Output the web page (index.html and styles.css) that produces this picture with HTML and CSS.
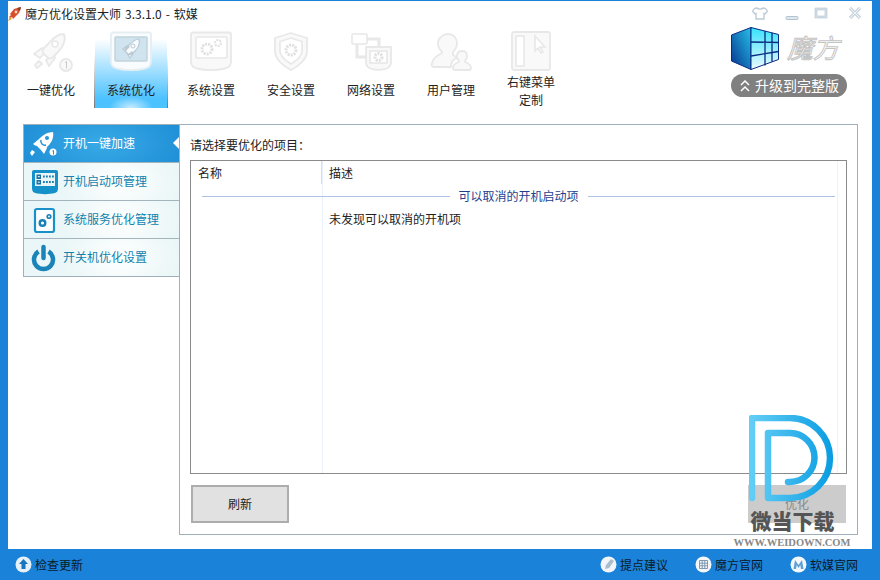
FILE: index.html
```html
<!DOCTYPE html>
<html lang="zh-CN">
<head>
<meta charset="utf-8">
<title>魔方优化设置大师</title>
<link rel="stylesheet" href="styles.css">
</head>
<body>
<div class="window">
  <div class="app">
    <header class="titlebar">
      <div class="title">
        <svg class="app-icon" viewBox="0 0 14 16"><path d="M13 1 6 3 2 8l1 1-2 2 1 1 2-1 1 2 1-1 1-1 4-4z" fill="#d8502a"/><path d="M13 1 9 2l3 3z" fill="#8a3a28"/><path d="M2 11 0 15l4-2z" fill="#e9a03a"/><circle cx="8" cy="6" r="1.400" fill="#f6d6c0"/></svg>
        <span class="title-text">魔方优化设置大师 3.3.1.0 - 软媒</span>
      </div>
      <div class="winbtns">
        <svg viewBox="0 0 16 16" class="wb wb-shirt"><path d="M5 3C3 3 1 4.500 .8 6.500L3 9l1-.5V14h8V8.500l1 .5 2.200-2.500C15 4.500 13 3 11 3 10 4.500 6 4.500 5 3z" fill="#fff" stroke="#bccbd6" stroke-width="1.400"/></svg>
        <svg viewBox="0 0 16 16" class="wb wb-min"><rect x="2" y="11.500" width="12" height="3" rx="1" fill="#dfe8ee" stroke="#b4c5d2"/></svg>
        <svg viewBox="0 0 16 16" class="wb wb-max"><path d="M2 3h12v10H2zM4 5h8v6H4z" fill="#d6e0e7" fill-rule="evenodd" stroke="#b4c5d2" stroke-width=".6"/></svg>
        <svg viewBox="0 0 16 16" class="wb"><path d="M3 3l10 10M13 3 3 13" stroke="#b4c5d2" stroke-width="3"/><path d="M3 3l10 10M13 3 3 13" stroke="#eef3f6" stroke-width="1.200"/></svg>
      </div>
    </header>

    <div class="toolbar">
      <nav class="tabs">
        <a class="tab">
          <svg class="tab-icon" viewBox="0 0 44 40">
            <path class="ic" d="M5 21l8-6 5 2-7 8zM20 33l6-8-1-4-8 6z"/>
            <path class="ic" d="M35 1c2 5 0 12-6 18l-5 5c-2 2-4 2-6 0l-3-3c-2-2-2-4 0-6l5-5C25 4 30 1 35 1z"/>
            <circle class="ici" cx="26" cy="11" r="3"/>
            <path class="ic" d="M10 28l3 3-5 4-2-3z"/>
            <circle class="ic" cx="37" cy="32" r="6"/>
            <path class="stroke-num" d="M36 29.500l1.500-1v7"/>
          </svg>
          <span>一键优化</span>
        </a>
        <a class="tab active">
          <svg class="tab-icon" viewBox="0 0 44 40">
            <path class="ic" d="M4 -.5h36a2 2 0 0 1 2 2v27c0 4-2 6-6 7-9 2-19 2-28 0-4-1-6-3-6-7v-27a2 2 0 0 1 2-2z"/>
            <rect class="panel-ic" x="6" y="4" width="32" height="24" rx="1"/>
            <path class="rk" d="M30 6c1 4 0 8-4 12l-3 3c-1 1-3 1-4 0l-2-2c-1-1-1-3 0-4l3-3c3-3 7-6 10-6zM14 16l4-3 2 1-4 4zM21 25l3-4-1-2-4 3z"/>
            <circle class="rkc" cx="24" cy="13" r="2"/>
          </svg>
          <span>系统优化</span>
        </a>
        <a class="tab">
          <svg class="tab-icon" viewBox="0 0 44 40">
            <path class="ic" d="M4 -.5h36a2 2 0 0 1 2 2v27c0 4-2 6-6 7-9 2-19 2-28 0-4-1-6-3-6-7v-27a2 2 0 0 1 2-2z"/>
            <rect class="ici" x="7" y="4" width="31" height="21" rx="1"/>
            <circle class="gear" cx="18" cy="16" r="5"/>
            <circle class="gear small" cx="29" cy="10" r="3"/>
          </svg>
          <span>系统设置</span>
        </a>
        <a class="tab">
          <svg class="tab-icon" viewBox="0 0 44 40">
            <path class="ic" d="M22 0l16 5v13c0 8-8 15-16 19C14 33 6 26 6 18V5z"/>
            <path class="ici" d="M22 5l11 3.500V18c0 5-6 10-11 13-5-3-11-8-11-13V8.500z"/>
            <circle class="gear" cx="22" cy="17" r="5"/>
          </svg>
          <span>安全设置</span>
        </a>
        <a class="tab">
          <svg class="tab-icon" viewBox="0 0 44 40">
            <path class="line" d="M8 11v13h9M18 6h12v8"/>
            <rect class="ici" x="3" y="1" width="15" height="10" rx="1"/>
            <path class="ic" d="M17 14h25v15c0 4-2 6-6 7-4 1-9 1-13 0-4-1-6-3-6-7z"/>
            <rect class="ici" x="21" y="18" width="17" height="12"/>
            <circle class="gear" cx="29.500" cy="24" r="3.500"/>
          </svg>
          <span>网络设置</span>
        </a>
        <a class="tab">
          <svg class="tab-icon" viewBox="0 0 44 40">
            <path class="ic" d="M19 1c5 0 9 4 9 9 0 4-2 7-4 9v3c2 1 3 2 4 3-4 1-6 4-6 9H5c-2 0-3-2-2-4 1-5 6-8 10-10v-1c-2-2-4-6-4-9 0-5 5-9 10-9z"/>
            <path class="ic" d="M33 18c3 0 5 2 5 5 0 2-1 4-2 5v1c3 1 6 3 6 6 0 1-1 2-2 2H26c-1 0-2-1-2-2 0-3 3-5 6-6v-1c-1-1-2-3-2-5 0-3 2-5 5-5z"/>
          </svg>
          <span>用户管理</span>
        </a>
        <a class="tab">
          <svg class="tab-icon menu-icon" viewBox="0 0 44 40"><rect class="ic" x="3" y="0" width="38" height="38" rx="2"/><rect class="ici" x="7" y="4" width="8" height="30"/><path class="ici" d="M26 4v15l3-3 3 5 2-1-3-5h5z"/></svg>
          <span class="two-line">右键菜单<br>定制</span>
        </a>
      </nav>
      <div class="brand">
        <div class="logo">
          <svg class="cube" viewBox="0 0 48 44">
            <defs>
              <linearGradient id="cubeL" x1="0" y1="1" x2="1" y2="0"><stop offset="0" stop-color="#06338f"/><stop offset="1" stop-color="#25c1e8"/></linearGradient>
              <linearGradient id="cubeR" x1="0" y1="0" x2="0" y2="1"><stop offset="0" stop-color="#35e2fb"/><stop offset="1" stop-color="#eefaff"/></linearGradient>
            </defs>
            <path d="M.5 8 20 .5v42L.5 34z" fill="url(#cubeL)" stroke="#0b2a80"/>
            <path d="M20 .5 47.500 7.500v25L20 42.500z" fill="url(#cubeR)" stroke="#0b2a80"/>
            <path d="M34 4v34.500M41 5.800v29M20 15l27.500 .5M20 29l27.500-4.500" stroke="#0b2a80" stroke-width="1.300" fill="none"/>
          </svg>
          <span class="logo-text">魔方</span>
        </div>
        <a class="upgrade">
          <svg class="chev" viewBox="0 0 10 12"><path d="M1 5l4-4 4 4M1 11l4-4 4 4" fill="none" stroke="#fff" stroke-width="1.500"/></svg>
          <span>升级到完整版</span>
        </a>
      </div>
    </div>

    <div class="content">
      <aside class="side">
        <a class="side-item current">
          <svg class="side-icon" viewBox="0 0 30 30">
            <path d="M25 3c1 5-1 10-5 14l-3 3c-2 2-3 2-5 0l-3-3c-2-2-2-3 0-5l3-3c4-4 8-6 13-6z" fill="#fff"/>
            <path d="M5 15l5-4 3 1-5 5zM16 25l3-6-1-2-5 4z" fill="#fff"/>
            <path d="M4 21l3 2-3 4-2-3z" fill="#fff"/>
            <path d="M13 11a4 4 0 0 0 5 5" fill="none" stroke="#2a96da" stroke-width="1.600"/>
            <circle cx="19" cy="9" r="2" fill="#2a96da"/>
            <circle cx="25" cy="23" r="3.500" fill="#fff"/>
            <path d="M24.500 22l1-.5v4" stroke="#1f8ed6" fill="none"/>
          </svg>
          <span>开机一键加速</span>
        </a>
        <a class="side-item">
          <svg class="side-icon" viewBox="0 0 30 30">
            <path d="M4 5a2 2 0 0 1 2-2h22a2 2 0 0 1 2 2v16c0 3-1 4-3 5-6 1.500-14 1.500-20 0-2-1-3-2-3-5z" fill="#1590c8"/>
            <rect x="7" y="6" width="20" height="13" fill="#e8f4f8"/>
            <path d="M8.500 7.500h4.500v4.500H8.500zM8.500 13h4.500v4.500H8.500z" fill="#1a6f9f"/>
            <path d="M9.800 9.700h2M9.800 15.200h2" stroke="#fff"/>
            <path d="M15 9.500h11M15 15h11" stroke="#1a7fb0" stroke-width="1.800" stroke-dasharray="1.800 1.200"/>
          </svg>
          <span>开机启动项管理</span>
        </a>
        <a class="side-item">
          <svg class="side-icon" viewBox="0 0 30 30">
            <rect x="7" y="4" width="19" height="23" rx="2" fill="#fff" stroke="#1a90c8" stroke-width="2.200"/>
            <circle cx="14.500" cy="18" r="2.800" fill="none" stroke="#1a80b8" stroke-width="2.400"/>
            <circle cx="21" cy="11.500" r="2.600" fill="#1a80b8"/>
            <circle cx="21" cy="11.500" r=".9" fill="#fff"/>
          </svg>
          <span>系统服务优化管理</span>
        </a>
        <a class="side-item">
          <svg class="side-icon" viewBox="0 0 30 30"><path d="M10.500 8.500a9.500 9.500 0 1 0 10 0" fill="none" stroke="#1a84b8" stroke-width="4.500"/><path d="M15.500 4v11" stroke="#1a84b8" stroke-width="4.500" stroke-linecap="round"/></svg>
          <span>开关机优化设置</span>
        </a>
        <i class="notch"></i>
      </aside>

      <main class="panel">
        <p class="prompt">请选择要优化的项目<span class="colon">：</span></p>
        <div class="table">
          <div class="thead">
            <span class="th first">名称</span>
            <span class="th">描述</span>
          </div>
          <div class="group">
            <i class="rule"></i>
            <span>可以取消的开机启动项</span>
            <i class="rule"></i>
          </div>
          <div class="row">
            <span class="td first"></span>
            <span class="td">未发现可以取消的开机项</span>
          </div>
        </div>
        <div class="actions">
          <button class="btn">刷新</button>
          <button class="btn ghost">优化</button>
        </div>
      </main>
    </div>
  </div>

  <footer class="footer">
    <a class="flink">
      <svg class="ficon" viewBox="0 0 17 17"><circle cx="8.500" cy="8.500" r="8" fill="#e4f0fa"/><path d="M8.500 3 13 8H10.500v5h-4V8H4z" fill="#1a74bc"/></svg>
      <span>检查更新</span>
    </a>
    <div class="flinks">
      <a class="flink">
        <svg class="ficon" viewBox="0 0 17 17"><circle cx="8.500" cy="8.500" r="8" fill="#f2f6fa"/><path d="M11 3l3 2-5 7-4 1 1-4z" fill="#a9bdcd"/></svg>
        <span>提点建议</span>
      </a>
      <a class="flink">
        <svg class="ficon" viewBox="0 0 17 17"><circle cx="8.500" cy="8.500" r="8" fill="#f5f8fb"/><path d="M4.500 4.500h8v8h-8zM7.200 4.500v8M9.800 4.500v8M4.500 7.200h8M4.500 9.800h8" fill="none" stroke="#7f99b0"/></svg>
        <span>魔方官网</span>
      </a>
      <a class="flink">
        <svg class="ficon" viewBox="0 0 17 17"><circle cx="8.500" cy="8.500" r="8" fill="#f5f8fb"/><path d="M3.500 13 5 4l3.500 5L12 4l1.500 9h-2.500l-.7-4-1.800 3-1.800-3-.7 4z" fill="#5e9fd6"/></svg>
        <span>软媒官网</span>
      </a>
    </div>
  </footer>

  <div class="watermark">
    <svg class="wm-logo" viewBox="0 0 90 90">
      <defs>
        <linearGradient id="wmG" x1="0" y1="0" x2="1" y2="0"><stop offset="0" stop-color="#62cdf6"/><stop offset="1" stop-color="#0c9ee2"/></linearGradient>
      </defs>
      <path d="M3 83V3h38a40 40 0 0 1 0 80H19V18h22a24.500 24.500 0 0 1 0 49h-2" fill="none" stroke="url(#wmG)" stroke-width="6.500" stroke-linecap="round" stroke-linejoin="round"/>
    </svg>
    <span class="wm-cn">微当下载</span>
    <span class="wm-en">WWW.WEIDOWN.COM</span>
  </div>
</div>
</body>
</html>
```
FILE: styles.css
```css
* { box-sizing: border-box; }
html, body { margin: 0; padding: 0; }
body {
  width: 880px;
  height: 580px;
  overflow: hidden;
  font-family: "Noto Sans CJK SC", "Noto Sans", sans-serif;
  font-size: 12px;
  color: #222;
}
a { color: inherit; text-decoration: none; }
p { margin: 0; }

.window {
  position: relative;
  width: 880px;
  height: 580px;
  background: #1a82d8;
  padding-top: 1px;
  display: flex;
  flex-direction: column;
}
.app {
  height: 548px;
  margin: 0 8px;
  background: #fff;
  display: flex;
  flex-direction: column;
}

.titlebar {
  height: 32px;
  display: flex;
  justify-content: space-between;
  align-items: flex-start;
  padding: 4px 9px 0 0;
}
.title { display: flex; align-items: center; height: 17px; line-height: 17px; }
.title-text { word-spacing: 1.300px; }
.app-icon { width: 14px; height: 16px; margin-right: 3px; }
.winbtns { display: flex; }
.wb { width: 16px; height: 16px; }
.wb-shirt { margin-right: 16px; }
.wb-min { margin-right: 13px; }
.wb-max { margin-right: 18px; }

.toolbar {
  height: 91px;
  display: flex;
  justify-content: space-between;
  padding: 0 25px 0 3px;
}
.tabs { display: flex; height: 75px; }
.tab {
  width: 74px;
  margin: 0 3px;
  display: flex;
  flex-direction: column;
  align-items: center;
  position: relative;
}
.tab span {
  position: absolute;
  top: 48px;
  line-height: 18px;
  text-align: center;
  white-space: nowrap;
  color: #222;
}
.tab .two-line { top: 40px; }
.tab.active {
  background:
    radial-gradient(ellipse 22px 12px at 50% 100%, #c8ecff 0%, rgba(200,236,255,0) 100%),
    linear-gradient(#fff 0%, #fff 8%, #4cc2ff 88%, #4cc2ff 100%);
  border-left: 1px solid;
  border-right: 1px solid;
  border-image: linear-gradient(#fff 30%, #6f7378 100%) 1;
}
.tab-icon { width: 44px; height: 40px; overflow: visible; }
.menu-icon { margin-top: -1px; }
.ic { fill: #f9f9f9; stroke: #e8e8e8; stroke-width: 1.800; stroke-linejoin: round; }
.ici { fill: #fff; stroke: #e8e8e8; stroke-width: 1.600; }
.panel-ic { fill: #cfe4ee; stroke: #c2d3dc; stroke-width: 1.500; }
.gear { fill: #fff; stroke: #e0e0e0; stroke-width: 3; stroke-dasharray: 2 1; }
.gear.small { stroke-width: 2; }
.line { fill: none; stroke: #e8e8e8; stroke-width: 3; }
.stroke-num { fill: none; stroke: #c9c9c9; stroke-width: 1; }
.rk { fill: #f7fbfd; stroke: #b8c9d3; stroke-width: 1.200; }
.rkc { fill: #fff; stroke: #b8c9d3; }
.active .ic { fill: #f8fcfe; stroke: #e6eef3; }

.brand { width: 116px; display: flex; flex-direction: column; align-items: center; margin-top: -6px; }
.logo { height: 47px; width: 116px; display: flex; align-items: flex-start; }
.cube { width: 48px; height: 44px; flex: none; }
.logo-text {
  margin-left: 8px;
  margin-top: 2px;
  font-size: 26px;
  line-height: 36px;
  font-style: italic;
  color: #fff;
  -webkit-text-stroke: 1px #c4c4c4;
}
.upgrade {
  width: 116px;
  height: 23px;
  border-radius: 12px;
  background: #808080;
  color: #fff;
  font-size: 14px;
  line-height: 23px;
  display: flex;
  align-items: center;
  padding-left: 9px;
  gap: 5px;
}
.chev { width: 10px; height: 12px; }

.content {
  height: 411px;
  margin: 0 14px 0 15px;
  display: flex;
  position: relative;
}
.side {
  width: 156px;
  height: 153px;
  border: 1px solid #9fb0ba;
  border-right: 0;
  position: relative;
  flex: none;
}
.side-item {
  height: 38px;
  display: flex;
  align-items: center;
  gap: 5px;
  padding-left: 4px;
  border-bottom: 1px solid #a4b4bc;
  background: radial-gradient(ellipse 60px 40px at 62% 50%, #ffffff 0%, #eaf6f7 100%);
  color: #1183ad;
}
.side-item span { margin-top: -2px; }
.side-item:last-of-type { border-bottom: 0; height: 37px; }
.side-item.current {
  background: radial-gradient(ellipse 90px 40px at 50% 50%, #38aae6 0%, #1f8ed6 100%);
  color: #fff;
}
.side-icon { width: 30px; height: 30px; flex: none; }
.notch {
  position: absolute;
  left: 149px;
  top: 12px;
  width: 0;
  height: 0;
  border-top: 6px solid transparent;
  border-bottom: 6px solid transparent;
  border-right: 6px solid #fff;
}

.panel {
  flex: 1;
  height: 411px;
  border: 1px solid #9fb0ba;
  padding: 0 10px;
  display: flex;
  flex-direction: column;
}
.prompt { height: 35px; line-height: 18px; padding: 11px 0 0 0; }
.colon { font-family: "Noto Sans CJK TC", sans-serif; }
.table {
  height: 314px;
  border: 1px solid #8a8a8a;
  background:
    linear-gradient(#e8f0fb, #e8f0fb) 131px 0 / 1px 100% no-repeat,
    linear-gradient(#eef3fb, #eef3fb) 646px 0 / 1px 100% no-repeat;
}
.thead { display: flex; height: 23px; line-height: 23px; }
.th { padding-left: 7px; }
.th.first { width: 131px; border-right: 1px solid #dcdcdc; }
.group {
  display: flex;
  align-items: center;
  height: 24px;
  gap: 9px;
  padding: 0 11px;
  color: #1e3f8e;
  line-height: 24px;
}
.rule { flex: 1; height: 1px; background: #aec0e4; }
.row { display: flex; height: 24px; line-height: 21px; }
.td { padding-left: 7px; }
.td.first { width: 131px; padding: 0; }

.actions { display: flex; justify-content: space-between; padding: 11px 0 0 1px; }
.btn {
  width: 98px;
  height: 38px;
  border: 2px solid #adadad;
  background: #e1e1e1;
  font: inherit;
  color: #222;
  padding: 0 0 2px;
}
.btn.ghost { background: #cccccc; border-color: #cccccc; color: #8a8a8a; margin-right: 1px; }

.footer {
  flex: 1;
  display: flex;
  justify-content: space-between;
  align-items: center;
  padding: 0 22px 0 15px;
  color: #0b1a2a;
}
.flinks { display: flex; gap: 27px; }
.flink { display: flex; align-items: center; gap: 3px; }
.ficon { width: 17px; height: 17px; }

.watermark {
  position: absolute;
  left: 737px;
  top: 415px;
  width: 110px;
  height: 135px;
  pointer-events: none;
  display: flex;
  flex-direction: column;
  align-items: center;
}
.wm-logo { width: 90px; height: 90px; margin-left: 3px; flex: none; }
.wm-cn {
  width: 86px;
  font-size: 21px;
  line-height: 30px;
  font-weight: 900;
  color: #555;
  margin-left: 3px;
  white-space: nowrap;
}
.wm-en {
  font-family: "Liberation Serif", serif;
  font-weight: 700;
  font-size: 10.500px;
  line-height: 14px;
  margin-top: 1px;
  color: #888;
  white-space: nowrap;
}
```
